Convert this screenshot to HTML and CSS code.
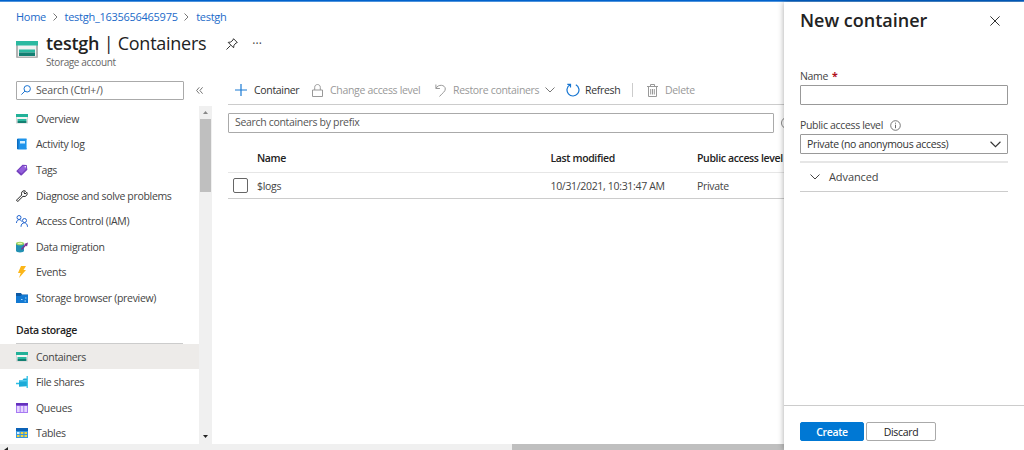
FILE: index.html
```html
<!DOCTYPE html>
<html lang="en">

<head>
    <meta charset="UTF-8" />
    <meta name="viewport" content="width=device-width, initial-scale=1">
    <title>testgh - Containers</title>
    <link rel="stylesheet" href="styles.css">
</head>

<body>
    <svg class="defs" width="0" height="0">
        <symbol id="i-storage" viewBox="0 0 22 18">
            <path d="M0 5h22v12a1 1 0 0 1-1 1H1a1 1 0 0 1-1-1z" fill="#b3b3b3" />
            <path d="M2 5h18v11.500H2z" fill="#f2f2f2" />
            <path d="M0 1h22v4.500H0z" fill="#2bb9a0" />
            <path d="M3 9.500h16v3H3z" fill="#2bb9a0" />
            <path d="M3 12.500h16v3.500H3z" fill="#137f72" />
        </symbol>
        <symbol id="i-storage-small" viewBox="0 0 12 10">
            <path d="M0 3h12v6.500H0z" fill="#d5d5d5" />
            <path d="M1 3h10v6H1z" fill="#f4f4f4" />
            <path d="M0 0h12v3H0z" fill="#22b198" />
            <path d="M1.500 5h9v2h-9z" fill="#2bb9a0" />
            <path d="M1.500 7h9v2h-9z" fill="#137f72" />
        </symbol>
        <symbol id="i-chevron" viewBox="0 0 10 6">
            <path d="M.5.5 5 5 9.500.5" fill="none" stroke="currentColor" />
        </symbol>
    </svg>

    <div class="topbar"></div>
    <div class="page">
        <main class="blade">
            <nav class="breadcrumb">
                <a>Home</a>
                <svg width="5" height="8" viewBox="0 0 5 8"><path d="M.5.5 4 4 .5 7.500" fill="none" stroke="#777" /></svg>
                <a>testgh_1635656465975</a>
                <svg width="5" height="8" viewBox="0 0 5 8"><path d="M.5.5 4 4 .5 7.500" fill="none" stroke="#777" /></svg>
                <a>testgh</a>
            </nav>
            <header class="title">
                <svg class="title-icon" width="22" height="18"><use href="#i-storage" /></svg>
                <div>
                    <h1><b>testgh</b> | <span>Containers</span></h1>
                    <div class="subtitle">Storage account</div>
                </div>
                <svg class="pin" width="12" height="12" viewBox="0 0 12 12" fill="none" stroke="#333"><path d="M7.500.7 11.300 4.500 10 5 8 7.200l-.4 2.600L2.200 4.400l2.600-.4L7 2zM4.500 7.500.5 11.500" /></svg>
                <span class="more">···</span>
            </header>

            <div class="body">
                <aside class="sidebar">
                    <div class="menu-search">
                        <div class="search-box">
                            <svg width="10" height="10" viewBox="0 0 10 10" fill="none" stroke="#1a73d1"><circle cx="6.200" cy="3.800" r="3.200" /><path d="M3.900 6.100.4 9.600" /></svg>
                            <span>Search (Ctrl+/)</span>
                        </div>
                        <svg class="collapse" width="7" height="7" viewBox="0 0 7 7" fill="none" stroke="#666" stroke-width=".9"><path d="M3.300.3.600 3.500l2.700 3.200M6.600.3 3.900 3.500l2.700 3.200" /></svg>
                    </div>
                    <div class="menu-scroll">
                        <ul class="menu">
                            <li><svg width="12" height="10"><use href="#i-storage-small" /></svg><span>Overview</span></li>
                            <li><svg width="12" height="12" viewBox="0 0 12 12"><rect x="1" y=".5" width="10" height="11" rx="1" fill="#1f93ea" /><path d="M1 1h1.500v10H1z" fill="#0c6cc0" /><path d="M4 3h5v2.500H4z" fill="#d5efff" /><path d="M10.500 1.500v9" stroke="#7cc8f7" /></svg><span>Activity log</span></li>
                            <li><svg width="12" height="12" viewBox="0 0 12 12"><path d="M.8 6.500 6.500.8l4.200.2.700 4.700-5.600 5.500c-.5.500-.8.500-1.300 0L.8 7.800c-.5-.5-.5-.8 0-1.300z" fill="#7440bd" /><path d="m2 6.800 5-5 3 .2.500 2.500-5 5z" fill="#935fdc" /><circle cx="9.300" cy="2.700" r=".8" fill="#fff" /></svg><span>Tags</span></li>
                            <li><svg width="12" height="12" viewBox="0 0 12 12" fill="none" stroke="#222"><path d="M10.800 2.300 9 4 7.800 2.900 9.500 1.100C7.800.1 5.300 1.200 5.500 3.700L5.700 5 .9 9.800c-.8.800.5 2 1.300 1.300L7 6.300c3 .9 5-1.600 3.800-4z" /></svg><span>Diagnose and solve problems</span></li>
                            <li><svg width="12" height="12" viewBox="0 0 12 12" fill="none" stroke="#2466cf"><circle cx="3" cy="2.500" r="2" /><path d="M.5 8C.5 3.800 5.200 3.900 5.500 6.500" /><circle cx="8.500" cy="5.500" r="2" /><path d="M5 11.800c0-5.300 6.500-5.300 6.500 0" /></svg><span>Access Control (IAM)</span></li>
                            <li><svg width="12" height="12" viewBox="0 0 12 12"><path d="M0 2.500v7.300c0 2.100 8 2.100 8 0V2.500z" fill="#2391b3" /><ellipse cx="4" cy="2.500" rx="4" ry="1.800" fill="#9fd35b" /><ellipse cx="4" cy="2.500" rx="2.500" ry=".8" fill="#e5f5bd" /><path d="M5.500 8.500 10 3.500" stroke="#7b3192" stroke-width="1.500" /><path d="m8 3 4-1.500-1 4z" fill="#7b3192" /></svg><span>Data migration</span></li>
                            <li><svg width="12" height="12" viewBox="0 0 12 12"><path d="M5 0h5L7.500 4H10L3 12l1.700-5H2z" fill="#fcb619" /></svg><span>Events</span></li>
                            <li><svg width="12" height="12" viewBox="0 0 12 12"><path d="M0 1h5l1 1.500h6V11H0z" fill="#0c59a4" /><path d="M0 4h4.500l1-1H12v8H0z" fill="#1279d2" /><path d="M5 7h1.500v1H5zM9 5.500h1.500v1H9zM8.500 8.500H10v1H8.500z" fill="#a5dcff" /></svg><span>Storage browser (preview)</span></li>
                        </ul>
                        <h2>Data storage</h2>
                        <ul class="menu">
                            <li class="selected"><svg width="12" height="10"><use href="#i-storage-small" /></svg><span>Containers</span></li>
                            <li><svg width="12" height="12" viewBox="0 0 12 12"><path d="M3 4h3.500l1.200-1.500H11v7.800l-8 .5z" fill="#1caad7" /><path d="M3 4h8v1.500H3z" fill="#55cbed" /><path d="M0 7.500h3M11.200 0v12" stroke="#2bc0e4" stroke-width="1.300" /></svg><span>File shares</span></li>
                            <li><svg width="12" height="10" viewBox="0 0 12 10"><path d="M0 0h12v10H0z" fill="#a77af3" /><path d="M0 0h12v2.500H0z" fill="#6430bd" /><path d="M1 3h2.700v6H1zM4.700 3h2.600v6H4.700zM8.300 3H11v6H8.300z" fill="#e6d5ff" /></svg><span>Queues</span></li>
                            <li><svg width="12" height="10" viewBox="0 0 12 10"><path d="M0 0h12v10H0z" fill="#3897dd" /><path d="M0 0h12v3H0z" fill="#0c62b7" /><path d="M1 4h2.500v2H1z" fill="#d7efff" /><path d="M4.700 4h2.600v2H4.700zM8.500 4H11v2H8.500zM1 7h2.500v2H1zM4.700 7h2.600v2H4.700zM8.500 7H11v2H8.500z" fill="#f5d33d" /></svg><span>Tables</span></li>
                        </ul>
                        <div class="scrollbar">
                            <svg width="5" height="3" viewBox="0 0 5 3"><path d="M0 3h5L2.500 0z" fill="#888" /></svg>
                            <div class="thumb"></div>
                            <svg class="down" width="5" height="3" viewBox="0 0 5 3"><path d="M0 0h5L2.500 3z" fill="#222" /></svg>
                        </div>
                    </div>
                </aside>

                <section class="content">
                    <div class="toolbar">
                        <button class="cmd cmd-add"><svg width="12" height="12" viewBox="0 0 12 12"><path d="M6 0v12M0 6h12" stroke="#1a7ad4" stroke-width="1.200" /></svg>Container</button>
                        <button class="cmd cmd-access" disabled><svg width="11" height="13" viewBox="0 0 11 13" fill="none" stroke="currentColor"><path d="M.5 6h10v6.500H.5zM2.700 6V3.300c0-3.700 5.600-3.700 5.600 0V6" /></svg>Change access level</button>
                        <button class="cmd cmd-restore" disabled><svg width="11" height="13" viewBox="0 0 11 13" fill="none" stroke="currentColor"><path d="M.9.5v4h4M1 4.400C3-.1 10.300.5 10.300 5c0 2.600-2.700 3.800-5.800 7.500" /></svg>Restore containers<svg class="caret" width="10" height="6"><use href="#i-chevron" /></svg></button>
                        <button class="cmd cmd-refresh"><svg width="14" height="14" viewBox="0 0 14 14" fill="none" stroke="#1675d1" stroke-width="1.200"><path d="M4 1.800A6 6 0 1 0 9.800 1.700M1.300 1.300h3.200v3.200" /></svg>Refresh</button>
                        <span class="divider"></span>
                        <button class="cmd cmd-delete" disabled><svg width="11" height="13" viewBox="0 0 11 13" fill="none" stroke="currentColor"><path d="M0 2.500h11M3.500 2.500v-2h4v2M1.500 2.500v10h8v-10M3.700 5v5.500M5.500 5v5.500M7.300 5v5.500" /></svg>Delete</button>
                    </div>
                    <div class="filter">
                        <div class="filter-input">Search containers by prefix</div>
                        <span class="filter-toggle"></span>
                    </div>
                    <div class="grid grid-head">
                        <span></span><span>Name</span><span>Last modified</span><span>Public access level</span>
                    </div>
                    <div class="grid grid-row">
                        <span class="checkbox"></span><span>$logs</span><span>10/31/2021, 10:31:47 AM</span><span>Private</span>
                    </div>
                </section>
            </div>
            <div class="hscroll">
                <svg width="4" height="6" viewBox="0 0 4 6"><path d="M4 0v6L0 3z" fill="#222" /></svg>
                <div class="hthumb"></div>
            </div>
        </main>

        <aside class="panel">
            <div class="panel-head">
                <h2>New container</h2>
                <svg width="10" height="10" viewBox="0 0 10 10"><path d="m.4.4 9.200 9.200M9.600.4.4 9.600" stroke="#333" /></svg>
            </div>
            <form class="panel-form">
                <label>Name <em>*</em></label>
                <div class="field"></div>
                <label class="access-label">Public access level
                    <svg width="11" height="11" viewBox="0 0 11 11" fill="none" stroke="#555"><circle cx="5.500" cy="5.500" r="4.800" stroke-width=".8" /><path d="M5.500 4.700v3.500M5.500 2.700v1" stroke-width=".9" /></svg>
                </label>
                <div class="field select"><span>Private (no anonymous access)</span><svg width="11" height="7"><use href="#i-chevron" /></svg></div>
                <div class="advanced"><svg width="10" height="6"><use href="#i-chevron" /></svg><span>Advanced</span></div>
            </form>
            <footer class="panel-foot">
                <button class="btn primary">Create</button>
                <button class="btn">Discard</button>
            </footer>
        </aside>
    </div>
</body>

</html>
```
FILE: styles.css
```css
* {
    box-sizing: border-box;
}

body {
    margin: 0;
    height: 450px;
    overflow: hidden;
    font-family: "Open Sans", "Noto Sans", sans-serif;
    font-size: 10.5px;
    line-height: 14px;
    letter-spacing: -0.32px;
    color: #444;
    background: #fff;
}

svg {
    flex: none;
    display: block;
}

.defs {
    position: absolute;
}

h1,
h2,
ul {
    margin: 0;
    padding: 0;
    list-style: none;
}

button {
    font: inherit;
    letter-spacing: inherit;
    color: inherit;
}

.topbar {
    height: 2px;
    background: linear-gradient(#0062cc 50%, #4c92dc 50%);
}

.page {
    display: flex;
    height: 448px;
}

.blade {
    display: flex;
    flex-direction: column;
    width: 784px;
    overflow: hidden;
}

.breadcrumb {
    display: flex;
    align-items: center;
    gap: 7px;
    height: 16px;
    margin-top: 7px;
    padding-left: 16px;
    font-size: 11px;
    letter-spacing: -0.27px;
    color: #1b6ac9;
}

.breadcrumb svg {
    margin: 0 -1px 0 -0.5px;
}

.breadcrumb svg + a {
    margin-left: 1px;
}

.title {
    display: flex;
    height: 56px;
    padding-left: 16px;
}

.title-icon {
    margin: 15px 8px 0 0;
}

h1 {
    margin-top: 6px;
    font-size: 18px;
    font-weight: 400;
    line-height: 24px;
    letter-spacing: -0.26px;
    color: #222;
    white-space: nowrap;
}

h1 b {
    font-weight: 600;
}

.subtitle {
    font-size: 10px;
    letter-spacing: -0.38px;
    color: #666;
}

.pin {
    margin: 13px 0 0 20px;
}

.more {
    margin: 12px 0 0 14px;
    font-size: 12px;
    letter-spacing: 0;
}

.body {
    display: flex;
    height: 363px;
}

.sidebar {
    width: 212px;
}

.menu-search {
    display: flex;
    align-items: center;
    height: 19px;
    padding-left: 16px;
}

.search-box {
    display: flex;
    align-items: center;
    gap: 5px;
    width: 168px;
    height: 19px;
    padding: 0 0 1px 4px;
    border: 1px solid #aaa;
    border-radius: 1px;
    letter-spacing: -0.17px;
    color: #555;
}

.collapse {
    margin-left: 12px;
}

.menu-scroll {
    position: relative;
    height: 338px;
    margin-top: 6px;
    overflow: hidden;
}

.menu li {
    display: flex;
    align-items: center;
    width: 199px;
    height: 25.6px;
    padding-left: 16px;
}

.menu li svg {
    width: 12px;
    margin-right: 8px;
}

.menu .selected {
    background: #edebe9;
}

.menu-scroll h2 {
    width: 167px;
    height: 33px;
    margin-left: 16px;
    padding-top: 12px;
    border-bottom: 1px solid #ccc;
    font-size: 10.5px;
    font-weight: 600;
    color: #222;
}

.scrollbar {
    position: absolute;
    top: 0;
    right: 0;
    display: flex;
    flex-direction: column;
    align-items: center;
    width: 13px;
    height: 338px;
    padding: 5px 0 6px;
    background: #f0f0f0;
}

.thumb {
    width: 11px;
    height: 73px;
    margin-top: 5px;
    background: #bfbfbf;
}

.down {
    margin-top: auto;
}

.content {
    width: 572px;
    padding-left: 16px;
}

.toolbar {
    display: flex;
    align-items: center;
    height: 24px;
    padding: 0 0 5px 7px;
    border-bottom: 1px solid #ccc;
}

.cmd {
    display: flex;
    align-items: center;
    gap: 7px;
    padding: 0;
    border: none;
    background: none;
    white-space: nowrap;
    color: #333;
}

.cmd:disabled {
    color: #999;
}

.cmd-add {
    width: 77px;
}

.cmd-access {
    width: 123px;
}

.cmd-restore {
    width: 131px;
}

.caret {
    margin-left: -1px;
    color: #777;
}

.cmd-refresh {
    gap: 5px;
    width: 66px;
}

.divider {
    width: 1px;
    height: 14px;
    margin-right: 14px;
    background: #ccc;
}

.filter {
    display: flex;
    align-items: center;
    height: 20px;
    margin-top: 8px;
}

.filter-input {
    flex: none;
    width: 546px;
    height: 20px;
    padding: 1px 6px;
    border: 1px solid #aaa;
    border-radius: 1px;
    color: #555;
}

.filter-toggle {
    flex: none;
    width: 12px;
    height: 12px;
    margin-left: 7px;
    border: 1px solid #888;
    border-radius: 50%;
}

.grid {
    display: grid;
    grid-template-columns: 29px 293.5px 146.500px 87px;
    align-items: center;
    white-space: nowrap;
}

.grid-head {
    height: 27px;
    margin-top: 13px;
    padding-bottom: 2px;
    border-bottom: 1px solid #e6e6e6;
    font-weight: 600;
    letter-spacing: -0.36px;
    color: #222;
}

.grid-row {
    height: 26px;
    border-bottom: 1px solid #ccc;
}

.checkbox {
    width: 15px;
    height: 15px;
    margin-left: 5px;
    border: 1px solid #666;
    border-radius: 2px;
}

.hscroll {
    display: flex;
    justify-content: space-between;
    height: 6px;
    padding-left: 4px;
    background: #f0f0f0;
}

.hscroll svg {
    margin-top: 3px;
}

.hthumb {
    width: 272px;
    background: #bfbfbf;
}

.panel {
    position: relative;
    display: flex;
    flex-direction: column;
    width: 240px;
    background: #fff;
    box-shadow: 0 0 6px rgba(0, 0, 0, 0.35);
}

.panel-head {
    display: flex;
    justify-content: space-between;
    align-items: center;
    height: 38px;
    padding: 0 24px 0 16px;
}

.panel-head h2 {
    margin-top: -2px;
    font-size: 18px;
    font-weight: 600;
    line-height: 24px;
    letter-spacing: 0;
    color: #222;
}

.panel-form {
    flex: 1;
    padding: 29px 16px 0;
}

.panel-form label {
    display: flex;
    gap: 4px;
    height: 16px;
}

.panel-form em {
    font-style: normal;
    font-weight: 700;
    color: #b00e1c;
}

.field {
    height: 20px;
    border: 1px solid #999;
    border-radius: 1px;
}

.panel-form .access-label {
    align-items: center;
    gap: 7px;
    height: 18px;
    margin-top: 11px;
}

.select {
    display: flex;
    align-items: center;
    justify-content: space-between;
    padding: 0 6px;
    color: #333;
}

.advanced {
    display: flex;
    align-items: center;
    gap: 9px;
    height: 31px;
    margin-top: 7px;
    padding-left: 10px;
    border-top: 2px solid #e6e6e6;
    border-bottom: 1px solid #ccc;
    font-size: 11px;
    letter-spacing: -0.1px;
}

.panel-foot {
    display: flex;
    gap: 2px;
    height: 45px;
    padding: 16px 16px 0;
    border-top: 1px solid #ccc;
}

.btn {
    width: 70px;
    height: 19px;
    padding: 0;
    border: 1px solid #aaa;
    border-radius: 2px;
    background: #fff;
    color: #222;
}

.primary {
    width: 64px;
    border-color: #0078d4;
    background: #0078d4;
    font-weight: 600;
    color: #fff;
}
```
